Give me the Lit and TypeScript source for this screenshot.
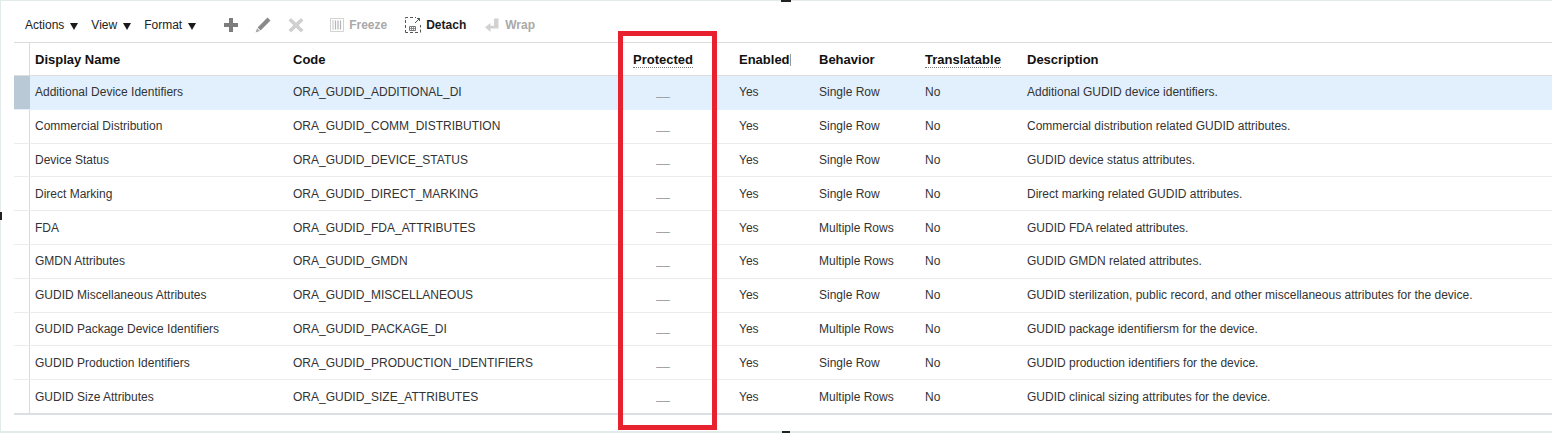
import { LitElement, html, css, svg } from "lit";
import { customElement } from "lit/decorators.js";

const ROWS: [string, string, string, string][] = [
  ["Additional Device Identifiers", "ORA_GUDID_ADDITIONAL_DI", "Single Row", "Additional GUDID device identifiers."],
  ["Commercial Distribution", "ORA_GUDID_COMM_DISTRIBUTION", "Single Row", "Commercial distribution related GUDID attributes."],
  ["Device Status", "ORA_GUDID_DEVICE_STATUS", "Single Row", "GUDID device status attributes."],
  ["Direct Marking", "ORA_GUDID_DIRECT_MARKING", "Single Row", "Direct marking related GUDID attributes."],
  ["FDA", "ORA_GUDID_FDA_ATTRIBUTES", "Multiple Rows", "GUDID FDA related attributes."],
  ["GMDN Attributes", "ORA_GUDID_GMDN", "Multiple Rows", "GUDID GMDN related attributes."],
  ["GUDID Miscellaneous Attributes", "ORA_GUDID_MISCELLANEOUS", "Single Row", "GUDID sterilization, public record, and other miscellaneous attributes for the device."],
  ["GUDID Package Device Identifiers", "ORA_GUDID_PACKAGE_DI", "Multiple Rows", "GUDID package identifiersm for the device."],
  ["GUDID Production Identifiers", "ORA_GUDID_PRODUCTION_IDENTIFIERS", "Single Row", "GUDID production identifiers for the device."],
  ["GUDID Size Attributes", "ORA_GUDID_SIZE_ATTRIBUTES", "Multiple Rows", "GUDID clinical sizing attributes for the device."],
];

const icon = (body: unknown) =>
  html`<svg class="ico" width="16" height="16" viewBox="0 0 16 16">${body}</svg>`;

const PLUS = svg`<path d="M6 1h4v5h5v4h-5v5H6v-5H1V6h5z" fill="#7d7d7d"/>`;
const PENCIL = svg`<path d="M12.500 .5l3 3L5.600 13.400l-3-3z" fill="#8a8a8a"/><path d="M2.100 11.200l2.700 2.700L.5 15.500z" fill="#a5a5a5"/>`;
const CROSS = svg`<path d="M3 1l5 4.800L13 1l2.500 2.500-4.800 4.800 4.800 4.800-2.500 2.400-5-4.800-5 4.800L.5 13.100l4.800-4.800L.5 3.500z" fill="#d0d0d0"/>`;
const FREEZE = svg`<path d="M1.500 1.500h13v13h-13z" fill="none" stroke="#d2d2d2"/><path d="M3 3h2v10H3z" fill="#e2e2e2"/><path d="M6.500 3.500v9M9 3.500v9M11.500 3.500v9" stroke="#b5b5b5" stroke-width="1.200"/>`;
const DETACH = svg`<path d="M.5 3v3M.5 8v3M.5 13v2.500H3M5 15.500h3M10 15.500h3M15.500 15.500v-3M15.500 10.500V8M.5 .5H3M5 .5h3M10 .5h1M.5 .5V1.500" fill="none" stroke="#555"/><path d="M4.500 9.500h6v4h-6z" fill="#fff" stroke="#777"/><path d="M4.500 11.500h6M6.500 9.500v4M8.500 9.500v4" stroke="#777" stroke-width=".8"/><path d="M10 6l4.500-4.500M12 1.500h2.500V4" fill="none" stroke="#555"/>`;
const WRAP = svg`<path d="M10 1.500h4.500v10H6.500V15L1 10.200 6.500 6v2.800H10z" fill="#d2d2d2"/>`;

@customElement("app-root")
export class AppRoot extends LitElement {
  static styles = css`
    :host {
      display: block;
      position: relative;
      width: 1552px;
      height: 433px;
      overflow: hidden;
      background: #fff;
      font-family: "Liberation Sans", Arial, sans-serif;
      font-size: 12px;
      color: #333;
    }
    .frame {
      box-sizing: border-box;
      height: 433px;
      padding-left: 13px;
      border-top: 1px solid #e3eaea;
      border-left: 1px solid #e3eaea;
      border-bottom: 2px solid #e3eaea;
    }
    .toolbar {
      display: flex;
      align-items: center;
      box-sizing: border-box;
      height: 42px;
      padding: 7px 0 0 11px;
      border-bottom: 1px solid #dcdcdc;
      color: #222;
    }
    .menu {
      display: flex;
      align-items: center;
      gap: 6px;
      margin-right: 13px;
    }
    .menu.last {
      margin-right: 27px;
    }
    .arrow {
      width: 0;
      height: 0;
      margin-top: 2px;
      border-left: 4.500px solid transparent;
      border-right: 4.500px solid transparent;
      border-top: 7px solid #1a1a1a;
    }
    .ico {
      display: block;
      flex: none;
    }
    .tool {
      display: flex;
      align-items: center;
      gap: 4px;
      font-weight: bold;
      color: #a9a9a9;
    }
    .tool.on {
      color: #1a1a1a;
      gap: 5px;
    }
    .tool.wrap {
      gap: 5px;
    }
    .m16 { margin-right: 16px; }
    .m17 { margin-right: 17px; }
    .m25 { margin-right: 25px; }
    .m18 { margin-right: 18px; }
    .row {
      display: grid;
      grid-template-columns: 16px 258px 304px 142px 80px 106px 102px 1fr;
      align-items: center;
    }
    .head {
      height: 33px;
      box-sizing: border-box;
      border-bottom: 1px solid #dcdcdc;
      font-weight: bold;
      font-size: 13px;
      color: #111;
    }
    .body {
      height: 33.800px;
      box-sizing: border-box;
      border-bottom: 1px solid #ececec;
    }
    .body:last-child {
      height: 34.800px;
      border-bottom: 2px solid #d9dfe2;
    }
    .body.sel {
      background: #e2f0fd;
      border-bottom-color: #e2f0fd;
    }
    .gut {
      align-self: stretch;
      border-right: 1px solid #dadada;
    }
    .sel .gut {
      background: #b9c9d6;
      border-right-color: #b9c9d6;
    }
    .c {
      padding-left: 5px;
      white-space: nowrap;
    }
    .mid {
      text-align: center;
      padding-left: 0;
    }
    .dash {
      color: #999;
      padding-bottom: 3px;
    }
    .tip {
      border-bottom: 1px dotted #777;
    }
    .bar {
      display: inline-block;
      border-right: 1px solid #999;
      line-height: 12px;
    }
    .mark {
      position: absolute;
      box-sizing: border-box;
      left: 618px;
      top: 31px;
      width: 99px;
      height: 399px;
      border: 5px solid #e8212e;
    }
    .grip {
      position: absolute;
      background: #222;
    }
    .g-top { left: 781px; top: 0; width: 10px; height: 2px; }
    .g-bot { left: 782px; top: 431px; width: 8px; height: 2px; }
    .g-left { left: 0; top: 212px; width: 2px; height: 8px; }
  `;

  render() {
    return html`
      <div class="frame">
        <div class="toolbar">
          ${["Actions", "View", "Format"].map(
            (m, i) => html`<div class="menu ${i === 2 ? "last" : ""}"><span>${m}</span><span class="arrow"></span></div>`
          )}
          <div class="m16">${icon(PLUS)}</div>
          <div class="m17">${icon(PENCIL)}</div>
          <div class="m25">${icon(CROSS)}</div>
          <div class="tool m18">${icon(FREEZE)}<span>Freeze</span></div>
          <div class="tool on m18">${icon(DETACH)}<span>Detach</span></div>
          <div class="tool wrap">${icon(WRAP)}<span>Wrap</span></div>
        </div>
        <div class="row head">
          <div class="gut"></div>
          <div class="c">Display Name</div>
          <div class="c">Code</div>
          <div class="c mid"><span class="tip">Protected</span></div>
          <div class="c"><span class="bar">Enabled</span></div>
          <div class="c">Behavior</div>
          <div class="c"><span class="tip">Translatable</span></div>
          <div class="c">Description</div>
        </div>
        ${ROWS.map(
          (r, i) => html`
            <div class="row body ${i === 0 ? "sel" : ""}">
              <div class="gut"></div>
              <div class="c">${r[0]}</div>
              <div class="c">${r[1]}</div>
              <div class="c mid dash">__</div>
              <div class="c">Yes</div>
              <div class="c">${r[2]}</div>
              <div class="c">No</div>
              <div class="c">${r[3]}</div>
            </div>
          `
        )}
      </div>
      <div class="mark"></div>
      <div class="grip g-top"></div>
      <div class="grip g-bot"></div>
      <div class="grip g-left"></div>
    `;
  }
}
